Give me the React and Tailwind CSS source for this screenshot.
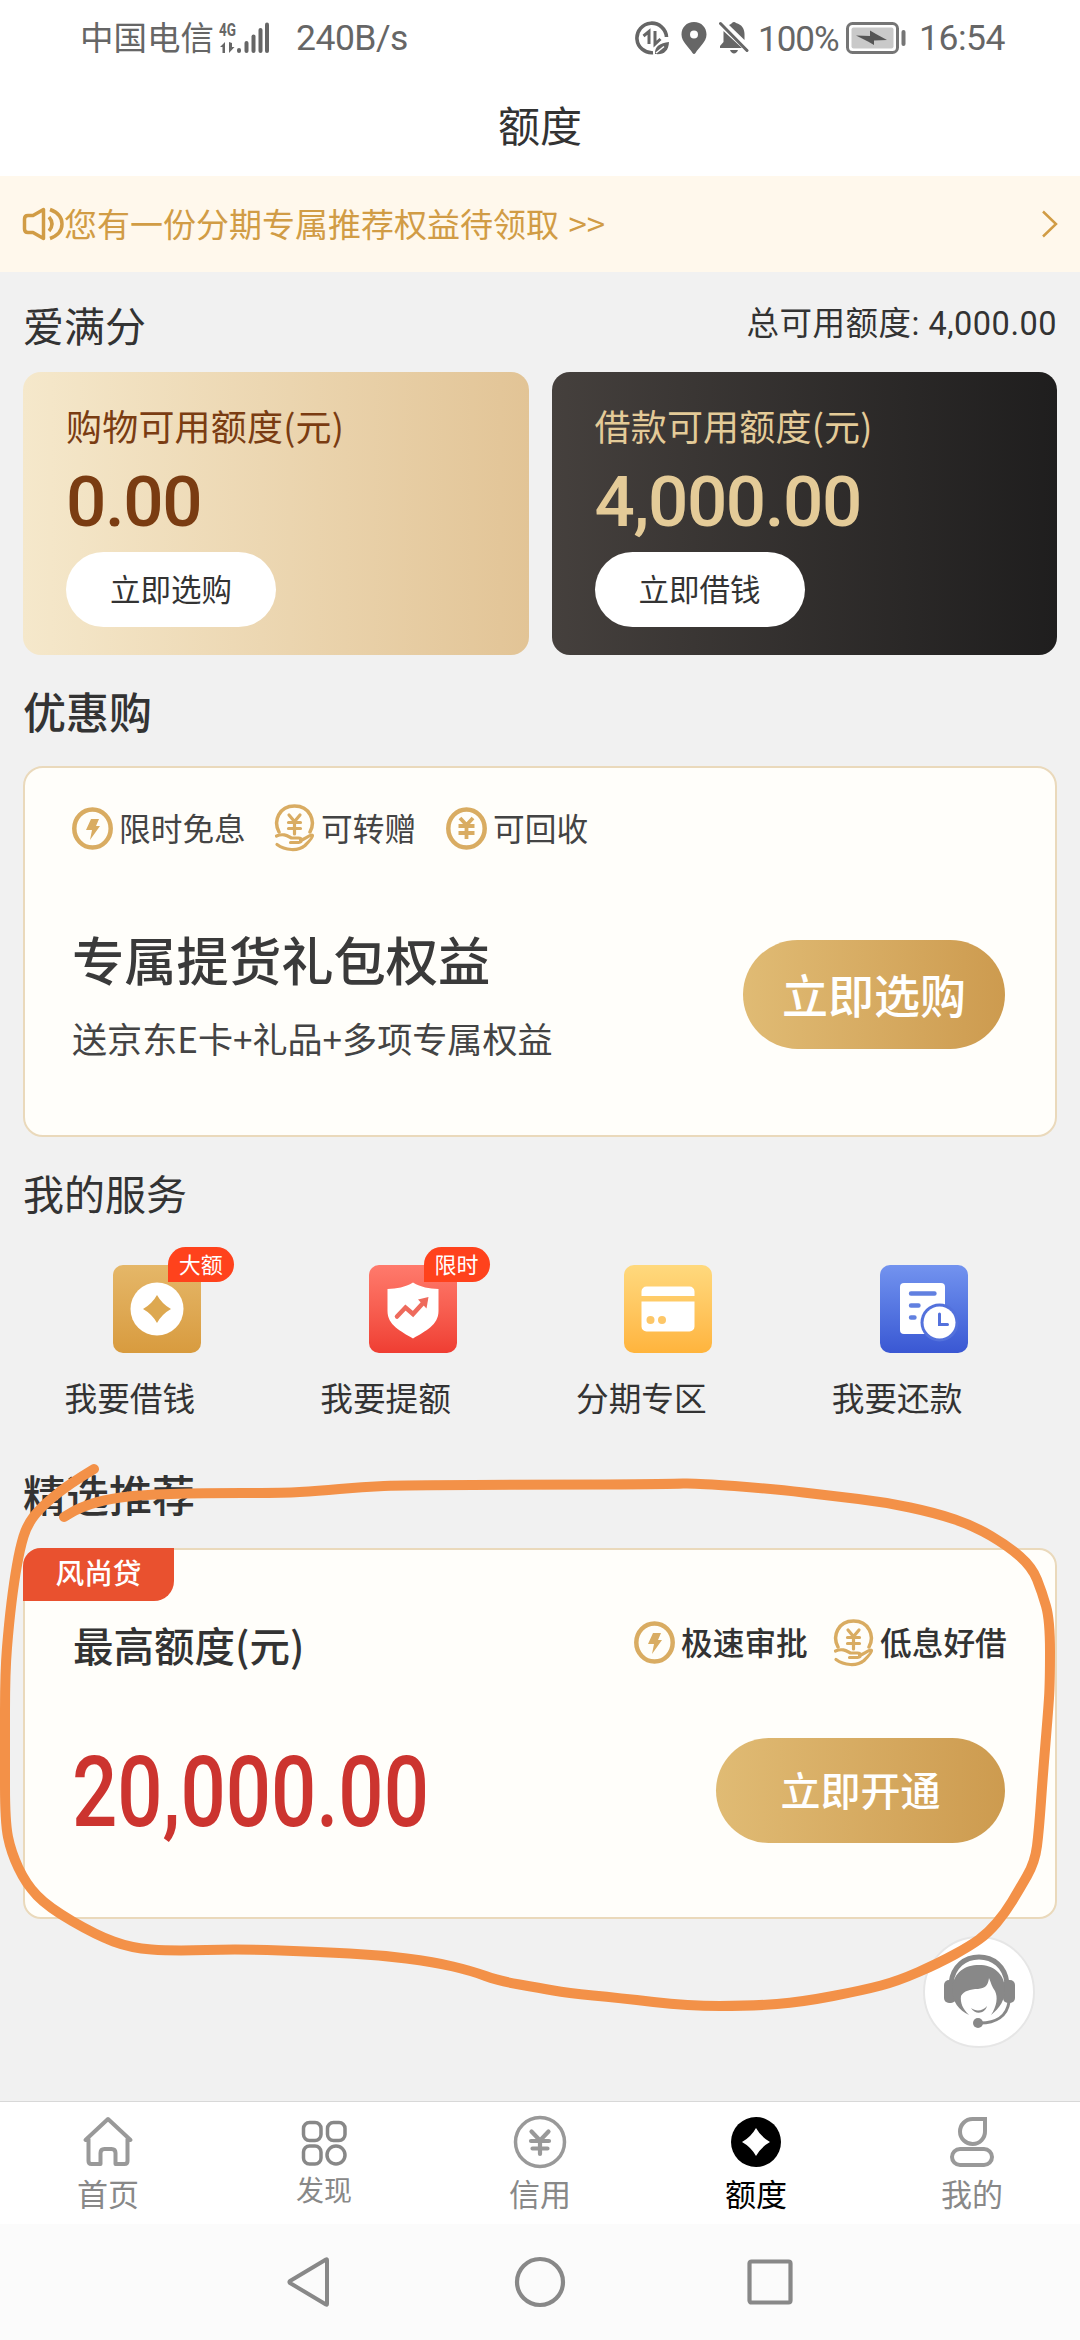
import { useState } from "react";

const SANS = "font-['Noto_Sans_CJK_SC',sans-serif]";
const NUM = "font-['Roboto','Noto_Sans_CJK_SC',sans-serif]";

function DataSaverIcon() {
  return (
    <svg width="34" height="34" viewBox="0 0 34 34" fill="none">
      <path d="M31.500 16A14.800 14.800 0 1 0 18 31.700" stroke="#666" strokeWidth="3.600" />
      <path d="M8.500 15L14 10.500V23M20 10v13l5.500-5" stroke="#666" strokeWidth="3" />
      <path d="M20 33c-.5-8 5-11 14-12-.5 9-5 13-14 12z" fill="#666" />
      <path d="M21 32l8-6.500" stroke="#fff" strokeWidth="1.500" />
    </svg>
  );
}

function BatteryIcon() {
  return (
    <svg width="60" height="32" viewBox="0 0 60 32" fill="none">
      <rect x="1.500" y="1.500" width="50" height="29" rx="5" stroke="#757575" strokeWidth="3" />
      <rect x="5.500" y="5.500" width="42" height="21" rx="2" fill="#c9c9c9" />
      <path d="M10 13.500l14 .5V8.500l6 3.500 11 6-13 .5v4.500l-6-3.500z" fill="#555" />
      <rect x="55.500" y="8" width="4" height="16" rx="2" fill="#757575" />
    </svg>
  );
}

function StatusBar() {
  return (
    <div className="flex h-[75px] items-center pr-[77px] pl-20 text-[#666]">
      <span className={`${SANS} -mt-1 w-[138px] text-[33.5px] leading-none`}>中国电信</span>
      <svg className="ml-[1px] overflow-visible" width="52" height="34" viewBox="0 0 52 34" fill="#666">
        <text x="0" y="15" fontSize="18" fontWeight="700" textLength="17" lengthAdjust="spacingAndGlyphs" fontFamily="Roboto, sans-serif">4G</text>
        <path d="M1 26l5-5v11H3.500v-6zM10 21v11l5.500-6H13v-4z" />
        <rect x="18" y="27" width="4" height="5" rx="2" />
        <rect x="25.500" y="20" width="4" height="12" rx="2" />
        <rect x="32.500" y="13.500" width="4" height="18.500" rx="2" />
        <rect x="39.500" y="7" width="4" height="25" rx="2" />
        <rect x="46" y="1.500" width="4" height="30.500" rx="2" />
      </svg>
      <span className={`${NUM} ml-[25px] mt-[3px] text-[35.5px] leading-none tracking-[-0.5px]`}>240B/s</span>
      <div className="ml-auto flex items-center">
        <DataSaverIcon />
        <svg className="ml-3" width="26" height="32" viewBox="0 0 26 32">
          <path d="M13 0C5.500 0 .5 5.500.5 12.500.5 20 8 25 11.500 31c.8 1.300 2.200 1.300 3 0C18 25 25.500 20 25.500 12.500 25.500 5.500 20.500 0 13 0zm0 8.500a4 4 0 1 1 0 8 4 4 0 0 1 0-8z" fill="#666" fillRule="evenodd" />
        </svg>
        <svg className="ml-3" width="30" height="33" viewBox="0 0 30 33">
          <path d="M4.500 10L23 27H1v-2l3.500-4zM10 4c1.500-.8 2.500-1 3-2 1-1.500 3-1.500 4 0 6 1.500 8.500 6 8.500 11v6zM11 29h8c-1.500 4.500-6.500 4.500-8 0z" fill="#666" />
          <path d="M1.500 2.500L28 29.500" stroke="#666" strokeWidth="3" strokeLinecap="round" />
        </svg>
        <span className={`${NUM} mt-[3px] ml-[9px] w-[84px] text-[35px] leading-none tracking-[-1px]`}>100%</span>
        <span className="ml-[4px]"><BatteryIcon /></span>
        <span className={`${NUM} mt-[3px] ml-[13px] w-[84px] text-[35.5px] leading-none tracking-[-0.5px]`}>16:54</span>
      </div>
    </div>
  );
}

function CreditCard({ label, amount, action, className, textClass }) {
  return (
    <div className={`flex h-[283px] flex-1 flex-col items-start rounded-[18px] pl-[43px] ${className}`}>
      <div className={`mt-[33px] h-11 text-[36px] leading-[40px] tracking-[0.2px] ${textClass}`}>{label}</div>
      <div className={`mt-[17px] h-[70px] text-[71px] leading-[72px] font-medium tracking-[-1.4px] ${NUM} ${textClass}`}>{amount}</div>
      <button className="mt-4 h-[75px] w-[210px] rounded-full bg-white pb-[3px] text-[30.5px] leading-none text-[#333]">
        {action}
      </button>
    </div>
  );
}

function BoltIcon() {
  return (
    <svg width="41" height="43" viewBox="0 0 41 43" fill="none">
      <ellipse cx="20.500" cy="21.500" rx="18.200" ry="19" stroke="#d9ac62" strokeWidth="4.500" />
      <path d="M19 12h8l-3 7h4L18 33l2-10h-6z" fill="#d9ac62" />
    </svg>
  );
}

function HandCoinIcon() {
  return (
    <svg width="41" height="48" viewBox="0 0 41 48" fill="none" stroke="#d9ac62" strokeLinecap="round">
      <path d="M5 28C-1 17 5 2 20.500 2S42 17 36 28" strokeWidth="3.500" />
      <path d="M15 11l5.500 6.500L26 11M20.500 18v12M14.500 18.500h12M14.500 24.500h12" strokeWidth="3.200" />
      <path d="M2.500 32c7-3 11 0 15 2h7c4 0 4 4 0 4.500h-8M3 40.500c8 6 21 7 28 1 4-4 8-8 7.500-10s-7 3-12 5" strokeWidth="3.200" />
    </svg>
  );
}

function CoinIcon() {
  return (
    <svg width="41" height="43" viewBox="0 0 41 43" fill="none" stroke="#d9ac62">
      <ellipse cx="20.500" cy="21.500" rx="18.200" ry="19" strokeWidth="4.500" />
      <path d="M14 11l6.500 7 6.500-7M20.500 18v14M12.500 19h16M12.500 26h16" strokeWidth="3.800" />
    </svg>
  );
}

function Perk({ icon, text, className }) {
  return (
    <div className={`flex items-center ${className}`}>
      {icon}
      <span className="-mt-[1px] ml-[6px] text-[31.7px] leading-none">{text}</span>
    </div>
  );
}

function ServiceIcon({ type }) {
  if (type === "borrow") {
    return (
      <svg width="88" height="88" viewBox="0 0 88 88">
        <circle cx="44" cy="44" r="26.500" fill="#fff" />
        <path d="M44 30q5 9 14 14-9 5-14 14-5-9-14-14 9-5 14-14z" fill="#dda850" />
      </svg>
    );
  }
  if (type === "raise") {
    return (
      <svg width="88" height="88" viewBox="0 0 88 88">
        <path d="M44 17.500c8 5 16 6 25.500 6.500v22c0 14-13 20-25.500 27.500C31.500 66 18.500 60 18.500 46V24C28 23.500 36 22.500 44 17.500z" fill="#fff" />
        <path d="M28 51.500l8.500-9 7.500 6.500 10.500-11.500" fill="none" stroke="#ee6a5c" strokeWidth="4.500" strokeLinecap="round" />
        <path d="M49 34.500l10.500-2.500-2 11.500z" fill="#ee6a5c" />
      </svg>
    );
  }
  if (type === "installment") {
    return (
      <svg width="88" height="88" viewBox="0 0 88 88">
        <path d="M17.500 31v-4.500a5 5 0 0 1 5-5h43a5 5 0 0 1 5 5V31zM17.500 36.500h53v25a5 5 0 0 1-5 5h-43a5 5 0 0 1-5-5z" fill="#fff" />
        <circle cx="26.500" cy="55" r="4" fill="#fdc768" />
        <circle cx="38" cy="55" r="4" fill="#fdc768" />
      </svg>
    );
  }
  return (
    <svg width="88" height="88" viewBox="0 0 88 88">
      <rect x="20" y="18" width="45" height="51" rx="4" fill="#fff" />
      <path d="M31 28.500h23.500M31 40.500h7.500M31 52.500h3.500" stroke="#6180e0" strokeWidth="4.400" strokeLinecap="round" />
      <circle cx="59.500" cy="57.500" r="19" fill="#5371dc" />
      <circle cx="59.500" cy="57.500" r="16" fill="#fff" />
      <path d="M59.500 49v10.500h8" fill="none" stroke="#5371dc" strokeWidth="3" strokeLinecap="round" />
    </svg>
  );
}

function TabIcon({ type }) {
  if (type === "home") {
    return (
      <svg width="52" height="54" viewBox="0 0 52 54" fill="none" stroke="#999" strokeWidth="4" strokeLinecap="round" strokeLinejoin="round">
        <path d="M3.500 25L26 4l22.500 21M6.500 24v22q0 3 3 3h9V38q0-4 4-4h7q4 0 4 4v11h9q3 0 3-3V24" />
      </svg>
    );
  }
  if (type === "discover") {
    return (
      <svg width="52" height="54" viewBox="0 0 52 54" fill="none" stroke="#888" strokeWidth="3.500">
        <rect x="5.500" y="7.500" width="17.500" height="18" rx="6" />
        <rect x="29.500" y="7.500" width="17.500" height="18" rx="6" />
        <rect x="5.500" y="31" width="17.500" height="18" rx="6" />
        <circle cx="38" cy="40" r="9" />
      </svg>
    );
  }
  if (type === "credit") {
    return (
      <svg width="54" height="54" viewBox="0 0 54 54" fill="none" stroke="#999" strokeLinecap="round">
        <circle cx="27" cy="27" r="24.500" strokeWidth="3.500" />
        <path d="M18.500 16.500l8.500 9 8.500-9M27 25.500V39M18 26h18M19.500 33.500h15" strokeWidth="4.200" />
      </svg>
    );
  }
  if (type === "quota") {
    return (
      <svg width="52" height="54" viewBox="0 0 52 54">
        <circle cx="26" cy="27" r="25" fill="#000" />
        <path d="M26 13q5 9 14 14-9 5-14 14-5-9-14-14 9-5 14-14z" fill="#fff" />
      </svg>
    );
  }
  return (
    <svg width="52" height="54" viewBox="0 0 52 54" fill="none" stroke="#999" strokeWidth="4">
      <path d="M26.500 4H39v12a12.500 12.500 0 1 1-12.500-12z" />
      <rect x="6" y="34" width="40" height="16" rx="8" />
    </svg>
  );
}

function AgentIcon() {
  return (
    <svg width="72" height="76" viewBox="0 0 72 76" fill="#888">
      <path d="M8 29C10 12 22 3 36 3s26 9 28 26" fill="none" stroke="#888" strokeWidth="5" />
      <rect x="1" y="26" width="12" height="23" rx="5" />
      <rect x="60" y="26" width="12" height="23" rx="5" />
      <path d="M9 34C11 18 22 11 36 11s25 8 26 23c0 12-5 20-14 27 6-9 7-18 4-24-3-4-4-8-6-13-1 8-4 10-11 11-8 0-14 2-17 7-1 7 2 13 8 19C16 56 9 48 9 34z" />
      <path d="M28 54c5 4 12 3 16-2-2 8-12 9-16 2z" />
      <path d="M66 48C64 62 53 69 37 69" fill="none" stroke="#888" strokeWidth="3" />
      <circle cx="35" cy="69" r="5" />
    </svg>
  );
}

const markerPoints = [
  [94, 1469], [69, 1484], [41, 1507], [27, 1525], [20, 1548], [14, 1582], [9, 1623], [5, 1672],
  [5, 1750], [5, 1822], [11, 1852], [26, 1884], [48, 1907], [96, 1935], [131, 1948], [172, 1951],
  [241, 1949], [320, 1952], [379, 1955], [434, 1962], [472, 1971], [499, 1981], [540, 1988],
  [567, 1993], [619, 1998], [688, 2006], [752, 2006], [802, 2002], [864, 1990], [898, 1981],
  [939, 1963], [970, 1946], [988, 1933], [1005, 1913], [1019, 1890], [1035, 1862], [1039, 1830],
  [1043, 1773], [1048, 1713], [1050, 1683], [1050, 1620], [1042, 1592], [1032, 1567], [1008, 1546],
  [974, 1526], [936, 1513], [884, 1502], [833, 1496], [774, 1489], [695, 1483], [671, 1484],
  [540, 1485], [406, 1485], [362, 1487], [317, 1491], [282, 1493], [203, 1493], [138, 1495],
  [103, 1500], [79, 1508], [64, 1517],
];

// joins the points through their midpoints so the corners come out rounded
function smoothPath(points) {
  let d = `M${points[0][0]} ${points[0][1]}`;
  for (let i = 1; i < points.length - 1; i++) {
    const [x, y] = points[i];
    const [nx, ny] = points[i + 1];
    d += `Q${x} ${y} ${(x + nx) / 2} ${(y + ny) / 2}`;
  }
  const last = points[points.length - 1];
  return `${d}L${last[0]} ${last[1]}`;
}

// hand-drawn circle around the recommended card
function MarkerStroke() {
  return (
    <svg className="pointer-events-none absolute top-0 left-0" width="1080" height="2340" viewBox="0 0 1080 2340" fill="none">
      <path d={smoothPath(markerPoints)} stroke="#f39148" strokeWidth="10" strokeLinecap="round" strokeLinejoin="round" />
    </svg>
  );
}

const services = [
  { type: "borrow", label: "我要借钱", badge: "大额", bg: "from-[#e5b768] to-[#d89b3e]" },
  { type: "raise", label: "我要提额", badge: "限时", bg: "from-[#ff7a6c] to-[#ef3d32]" },
  { type: "installment", label: "分期专区", bg: "from-[#ffd97d] to-[#ffb43c]" },
  { type: "repay", label: "我要还款", bg: "from-[#7393ef] to-[#3a57d3]" },
];

const tabs = [
  { type: "home", label: "首页" },
  { type: "discover", label: "发现" },
  { type: "credit", label: "信用" },
  { type: "quota", label: "额度" },
  { type: "mine", label: "我的" },
];

export default function App() {
  const [active, setActive] = useState("quota");

  return (
    <div className={`relative flex h-[2340px] w-[1080px] flex-col overflow-hidden bg-[#f1f1f1] text-[#333] ${SANS}`}>
      <div className="bg-white">
        <StatusBar />
        <h1 className="flex h-[101px] items-center justify-center pb-[4px] text-[42px] leading-none">额度</h1>
      </div>

      <div className="flex h-24 items-center bg-[#fff8ec] pr-[22px] pl-[22px] text-[#d19c45]">
        <svg width="43" height="34" viewBox="0 0 43 34" fill="none" stroke="#d19c45" strokeWidth="3.500">
          <path d="M21.500 2.500v29L11 25.500H6q-3.500 0-3.500-3.500V12q0-3.500 3.500-3.500h5z" strokeLinejoin="round" />
          <path d="M27 10q6 7 0 14M28 2.500c16 6 16 23 0 29" />
        </svg>
        <span className="-mt-[1px] -ml-[1px] text-[33px] leading-none">
          您有一份分期专属推荐权益待领取 <span className="ml-[2px]">&gt;&gt;</span>
        </span>
        <svg className="ml-auto" width="18" height="28" viewBox="0 0 18 28" fill="none">
          <path d="M3 1.500L16 14 3 26.500" stroke="#d19c45" strokeWidth="2.500" />
        </svg>
      </div>

      <div className="flex h-[100px] items-center justify-between px-[23px]">
        <h2 className="mt-[5px] text-[41px] leading-none">爱满分</h2>
        <span className={`mt-[5px] text-[32.5px] leading-none tracking-[0.5px] ${NUM}`}>总可用额度: 4,000.00</span>
      </div>
      <div className="flex gap-[23px] px-[23px]">
        <CreditCard
          label="购物可用额度(元)"
          amount="0.00"
          action="立即选购"
          className="bg-linear-to-r from-[#f5e8cb] to-[#e2c496]"
          textClass="text-[#7a3c12]"
        />
        <CreditCard
          label="借款可用额度(元)"
          amount="4,000.00"
          action="立即借钱"
          className="bg-linear-to-r from-[#45403d] to-[#1f1e1e]"
          textClass="text-[#e4cb98]"
        />
      </div>

      <h2 className="flex h-[111px] items-center px-[23px] text-[43px] leading-none font-medium">优惠购</h2>
      <div className="mx-[23px] flex h-[371px] flex-col rounded-[20px] border-2 border-[#ead9bb] bg-[#fffefa] pr-[50px] pl-[47px] text-[#444]">
        <div className="mt-9 flex h-12 items-center">
          <Perk icon={<BoltIcon />} text="限时免息" className="w-[202px]" />
          <Perk icon={<HandCoinIcon />} text="可转赠" className="w-[172px]" />
          <Perk icon={<CoinIcon />} text="可回收" className="" />
        </div>
        <div className="mt-[76px] flex justify-between">
          <div>
            <h3 className="text-[52.300px] leading-[60px] font-medium text-[#3a3a3a]">专属提货礼包权益</h3>
            <p className="mt-[30px] text-[35.1px] leading-10">送京东E卡+礼品+多项专属权益</p>
          </div>
          <button className="mt-[12px] h-[109px] w-[262px] rounded-full bg-linear-to-r from-[#e0bb74] to-[#cd9b4f] pb-1 text-[46px] leading-none font-medium text-white">
            立即选购
          </button>
        </div>
      </div>

      <h2 className="flex h-[110px] items-center px-[23px] pt-px text-[41px] leading-none">我的服务</h2>
      <div className="ml-[2px] grid w-[1023px] grid-cols-4 pt-[18px]">
        {services.map((item) => (
          <div key={item.type} className="flex flex-col items-center">
            <div className={`relative ml-[54px] h-[88px] w-[88px] rounded-[10px] bg-linear-to-b ${item.bg}`}>
              <ServiceIcon type={item.type} />
              {item.badge && (
                <span className="absolute -top-[18px] left-[55px] flex h-[35px] w-[66px] items-center justify-center rounded-[18px] rounded-bl-none bg-[#ff421c] pb-[3px] text-[22px] leading-none text-white">
                  {item.badge}
                </span>
              )}
            </div>
            <span className="mt-[26px] text-[32.700px] leading-9">{item.label}</span>
          </div>
        ))}
      </div>

      <h2 className="flex h-[133px] items-center px-[23px] pt-[24px] text-[43px] leading-none font-medium">精选推荐</h2>
      <div className="mx-[23px] flex h-[371px] flex-col rounded-[18px] border-2 border-[#ead9bb] bg-[#fffefa]">
        <span className="-mt-[2px] -ml-[2px] flex h-[53px] w-[151px] items-center justify-center rounded-tl-[18px] rounded-br-[20px] bg-[#e9512f] pb-[4px] text-[28.7px] leading-none font-medium text-white">
          风尚贷
        </span>
        <div className="mt-[18px] flex h-[52px] items-center pl-[48px] font-medium">
          <span className="text-[40.500px] leading-none">最高额度(元)</span>
          <Perk icon={<BoltIcon />} text="极速审批" className="-mt-[5px] ml-auto w-[199px]" />
          <Perk icon={<HandCoinIcon />} text="低息好借" className="-mt-[5px] w-[222px]" />
        </div>
        <div className="mt-[67px] flex justify-between pr-[50px] pl-[47px]">
          <span className={`mt-[6px] w-[350px] origin-left scale-x-[0.813] text-[98px] leading-[98px] font-medium text-[#cc342f] ${NUM}`}>
            20,000.00
          </span>
          <button className="h-[105px] w-[289px] rounded-full bg-linear-to-r from-[#e0bb74] to-[#cd9b4f] pb-1 text-[40px] leading-none font-medium text-white">
            立即开通
          </button>
        </div>
      </div>

      <button className="absolute top-[1936px] left-[923px] flex h-28 w-28 items-center justify-center rounded-full border-2 border-[#e6e6e6] bg-white">
        <AgentIcon />
      </button>

      <nav className="mt-auto grid h-[123px] grid-cols-5 border-t border-[#d8d8d8] bg-white">
        {tabs.map((tab) => (
          <button
            key={tab.type}
            onClick={() => setActive(tab.type)}
            className={`flex flex-col items-center pt-[13px] ${active === tab.type ? "text-black" : "text-[#888]"}`}
          >
            <TabIcon type={tab.type} />
            <span className={tab.type === "discover" ? "mt-1 text-[28px] leading-8" : "mt-2 text-[31px] leading-8"}>{tab.label}</span>
          </button>
        ))}
      </nav>

      <div className="flex h-[116px] items-center justify-center gap-[178px] bg-[#fbfbfb]">
        <svg className="-ml-[2px] mr-[2px]" width="50" height="54" viewBox="0 0 50 54" fill="none">
          <path d="M44 5v44q0 1-1 .5L7 28q-1-1 0-2L43 4.500q1-.5 1 .5z" stroke="#888" strokeWidth="4" strokeLinejoin="round" />
        </svg>
        <svg width="54" height="54" viewBox="0 0 54 54" fill="none">
          <circle cx="27" cy="27" r="23" stroke="#888" strokeWidth="4.200" />
        </svg>
        <svg width="50" height="54" viewBox="0 0 50 54" fill="none">
          <rect x="4.500" y="6.500" width="41" height="41" rx="2" stroke="#888" strokeWidth="4.200" />
        </svg>
      </div>

      <MarkerStroke />
    </div>
  );
}
